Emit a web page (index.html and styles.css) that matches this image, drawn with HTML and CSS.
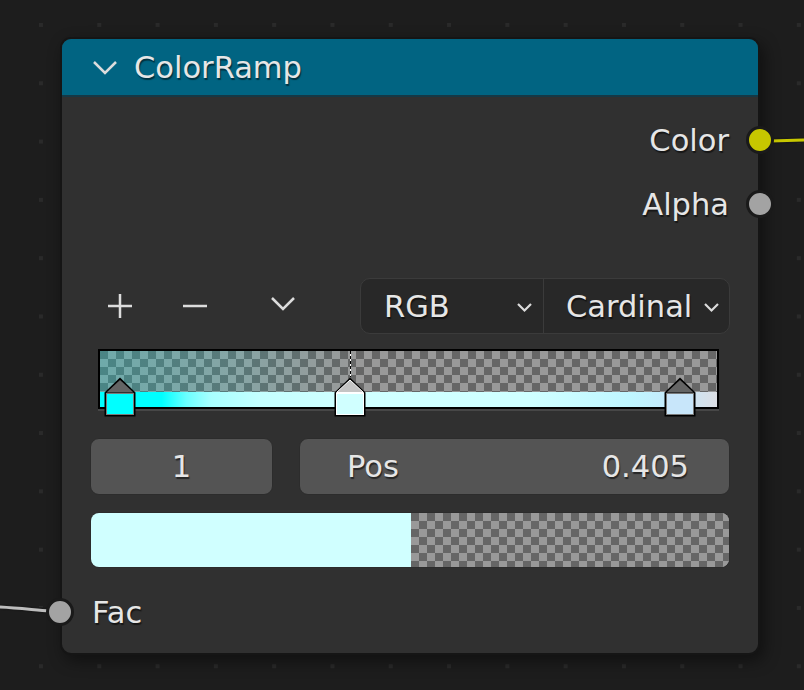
FILE: index.html
```html
<!DOCTYPE html>
<html lang="en">
<head>
    <meta charset="UTF-8">
    <title>ColorRamp</title>
    <link rel="stylesheet" href="styles.css">
</head>
<body>
    <div class="canvas">
        <svg class="wires" width="804" height="690" viewBox="0 0 804 690">
            <path d="M770 141 L804 140" stroke="#1a1a1a" stroke-width="6" fill="none"/>
            <path d="M770 141 L804 140" stroke="#c8c800" stroke-width="3" fill="none"/>
            <path d="M0 607 C 20 608, 35 610, 50 611" stroke="#1a1a1a" stroke-width="6" fill="none"/>
            <path d="M0 607 C 20 608, 35 610, 50 611" stroke="#bdbdbd" stroke-width="3" fill="none"/>
        </svg>

        <div class="node">
            <div class="node-header">
                <svg class="chevron" width="26" height="16" viewBox="0 0 26 16">
                    <polyline points="2,2 13,13 24,2" fill="none" stroke="#dcdcdc" stroke-width="2.5"/>
                </svg>
                <span class="title">ColorRamp</span>
            </div>

            <div class="node-body">
                <div class="socket-row output">
                    <span>Color</span>
                    <span class="socket socket-color"></span>
                </div>
                <div class="socket-row output">
                    <span>Alpha</span>
                    <span class="socket socket-gray"></span>
                </div>

                <div class="toolbar">
                    <div class="tool-btn">
                        <svg width="26" height="26" viewBox="0 0 26 26">
                            <path d="M13 1 V25 M1 13 H25" stroke="#dcdcdc" stroke-width="2.5"/>
                        </svg>
                    </div>
                    <div class="tool-btn minus">
                        <svg width="26" height="26" viewBox="0 0 26 26">
                            <path d="M1 13 H25" stroke="#dcdcdc" stroke-width="2.5"/>
                        </svg>
                    </div>
                    <div class="tool-btn menu">
                        <svg width="26" height="16" viewBox="0 0 26 16">
                            <polyline points="2,2 13,13 24,2" fill="none" stroke="#dcdcdc" stroke-width="2.5"/>
                        </svg>
                    </div>

                    <div class="dropdowns">
                        <div class="dropdown mode">
                            <span>RGB</span>
                            <svg width="17" height="11" viewBox="0 0 17 11">
                                <polyline points="2,2 8.5,8.5 15,2" fill="none" stroke="#dcdcdc" stroke-width="2.2"/>
                            </svg>
                        </div>
                        <div class="dropdown interp">
                            <span>Cardinal</span>
                            <svg width="17" height="11" viewBox="0 0 17 11">
                                <polyline points="2,2 8.5,8.5 15,2" fill="none" stroke="#dcdcdc" stroke-width="2.2"/>
                            </svg>
                        </div>
                    </div>
                </div>

                <div class="ramp">
                    <div class="ramp-alpha"></div>
                    <div class="ramp-color"></div>
                    <div class="active-line"></div>

                    <div class="stop stop-1">
                        <svg width="34" height="42" viewBox="0 0 34 42">
                            <path d="M1.5 16.5 L17 1.5 L32.5 16.5 V40.5 H1.5 Z" fill="#000"/>
                            <path d="M3.5 16.5 L17 4 L30.5 16.5 Z" fill="#646464"/>
                            <rect x="3.5" y="17.5" width="27" height="21" fill="#00ffff" stroke="#7a7a7a" stroke-width="1"/>
                        </svg>
                    </div>
                    <div class="stop stop-2">
                        <svg width="34" height="42" viewBox="0 0 34 42">
                            <path d="M1.5 16.5 L17 1.5 L32.5 16.5 V40.5 H1.5 Z" fill="#000"/>
                            <path d="M3.5 16.5 L17 4 L30.5 16.5 Z" fill="#c4c4c4" stroke="#fff" stroke-width="1"/>
                            <rect x="3.5" y="17.5" width="27" height="21" fill="#d0ffff" stroke="#fff" stroke-width="1"/>
                        </svg>
                    </div>
                    <div class="stop stop-3">
                        <svg width="34" height="42" viewBox="0 0 34 42">
                            <path d="M1.5 16.5 L17 1.5 L32.5 16.5 V40.5 H1.5 Z" fill="#000"/>
                            <path d="M3.5 16.5 L17 4 L30.5 16.5 Z" fill="#646464"/>
                            <rect x="3.5" y="17.5" width="27" height="21" fill="#c8e6fa" stroke="#7a7a7a" stroke-width="1"/>
                        </svg>
                    </div>
                </div>

                <div class="fields">
                    <div class="field index">1</div>
                    <div class="field pos">
                        <span>Pos</span>
                        <span>0.405</span>
                    </div>
                </div>

                <div class="swatch">
                    <div class="swatch-color"></div>
                    <div class="swatch-alpha"></div>
                </div>

                <div class="socket-row input">
                    <span class="socket socket-gray"></span>
                    <span>Fac</span>
                </div>
            </div>
        </div>
    </div>
</body>
</html>
```

FILE: styles.css
```css
* {
    margin: 0;
    padding: 0;
    box-sizing: border-box;
}

body {
    background: #1d1d1d;
    font-family: 'DejaVu Sans', 'Liberation Sans', sans-serif;
    color: #e6e6e6;
}

.canvas {
    position: relative;
    width: 804px;
    height: 690px;
    overflow: hidden;
    padding: 37px 0 0 60px;
    background-color: #1d1d1d;
    background-image: conic-gradient(from 270deg at 4px 4px, #2a2a2a 25%, transparent 0);
    background-size: 58.3px 58.3px;
    background-position: 39px 23px;
}

.wires {
    position: absolute;
    top: 0;
    left: 0;
}

.node {
    position: relative;
    width: 700px;
    height: 618px;
    background: #303030;
    border: 2px solid #151515;
    border-radius: 11px;
    box-shadow: 4px 6px 16px rgba(0, 0, 0, 0.45);
}

.node-header {
    height: 58px;
    display: flex;
    align-items: center;
    padding-left: 30px;
    background: #016482;
    border-bottom: 2px solid #163845;
    border-radius: 9px 9px 0 0;
}

.chevron {
    margin-top: 2px;
    margin-right: 16px;
}

.title {
    font-size: 30.5px;
    text-shadow: 1px 2px 1px rgba(0, 0, 0, 0.5);
}

.node-body {
    padding: 11px 28px 0;
    font-size: 30.5px;
    text-shadow: 1px 2px 1px rgba(0, 0, 0, 0.55);
}

.socket-row {
    position: relative;
    height: 64px;
    display: flex;
    align-items: center;
}

.socket-row.output {
    justify-content: flex-end;
    padding-right: 1px;
}

.socket-row.input {
    margin-top: 12px;
    padding-left: 2px;
}

.socket {
    position: absolute;
    top: 50%;
    width: 28px;
    height: 28px;
    margin-top: -14px;
    border-radius: 50%;
    border: 3px solid #1a1a1a;
}

.output .socket {
    right: -44px;
}

.input .socket {
    left: -44px;
}

.socket-color {
    background: #c7c700;
}

.socket-gray {
    background: #a3a3a3;
}

.toolbar {
    margin-top: 42px;
    height: 56px;
    display: flex;
    align-items: center;
}

.tool-btn {
    width: 60px;
    display: flex;
    justify-content: center;
    align-items: center;
}

.tool-btn.minus {
    margin-left: 15px;
}

.tool-btn.menu {
    margin-left: 28px;
    margin-top: -4px;
}

.dropdowns {
    margin-left: auto;
    width: 370px;
    height: 56px;
    display: flex;
    background: #282828;
    border: 1px solid #3b3b3b;
    border-radius: 10px;
}

.dropdown {
    display: flex;
    align-items: center;
}

.dropdown svg {
    margin-top: 3px;
}

.dropdown.mode {
    width: 183px;
    padding: 0 10px 0 23px;
    justify-content: space-between;
    border-right: 1px solid #3b3b3b;
}

.dropdown.interp {
    flex: 1;
    padding: 0 9px 0 22px;
    justify-content: space-between;
}

.ramp {
    position: relative;
    margin: 15px 11px 0 8px;
    height: 60px;
    border: 2px solid #000;
    background-color: #999;
    background-image: conic-gradient(#999 25%, #666 0 50%, #999 0 75%, #666 0);
    background-size: 16px 16px;
    box-shadow: 0 2px 0 #474747;
}

.ramp-alpha {
    position: absolute;
    top: 0;
    left: 0;
    right: 0;
    bottom: 15px;
    background: linear-gradient(to right, rgba(0, 215, 215, 0.28), rgba(0, 255, 255, 0.12) 22%, rgba(0, 255, 255, 0.03) 36%, transparent 42%);
}

.ramp-color {
    position: absolute;
    left: 0;
    right: 0;
    bottom: 0;
    height: 15px;
    background: linear-gradient(to right, #00ffff 0%, #00ffff 10%, #6affff 14%, #a8ffff 18%, #c4ffff 26%, #d0ffff 40%, #cfffff 70%, #bff6ff 86%, #c6e8fb 93.5%, #dcdee4 100%);
}

.active-line {
    position: absolute;
    left: 250px;
    top: 0;
    width: 1px;
    height: 26px;
    background: repeating-linear-gradient(#000 0 3px, #fff 3px 5px);
}

.stop {
    position: absolute;
    top: 25px;
    width: 34px;
    height: 42px;
}

.stop svg {
    display: block;
}

.stop-1 {
    left: 3px;
}

.stop-2 {
    left: 233px;
}

.stop-3 {
    left: 563px;
}

.fields {
    margin-top: 29px;
    height: 57px;
    display: flex;
    gap: 26px;
}

.field {
    display: flex;
    align-items: center;
    background: #545454;
    border: 1px solid #2c2c2c;
    border-radius: 9px;
}

.field.index {
    width: 183px;
    justify-content: center;
}

.field.pos {
    flex: 1;
    justify-content: space-between;
    padding: 0 40px 0 47px;
}

.swatch {
    margin-top: 17px;
    height: 56px;
    display: flex;
    border: 1px solid #2c2c2c;
    border-radius: 9px;
    overflow: hidden;
}

.swatch-color {
    width: 50.2%;
    background: #d0ffff;
}

.swatch-alpha {
    flex: 1;
    background-color: #999;
    background-image: conic-gradient(#999 25%, #666 0 50%, #999 0 75%, #666 0);
    background-size: 16px 16px;
}
```
